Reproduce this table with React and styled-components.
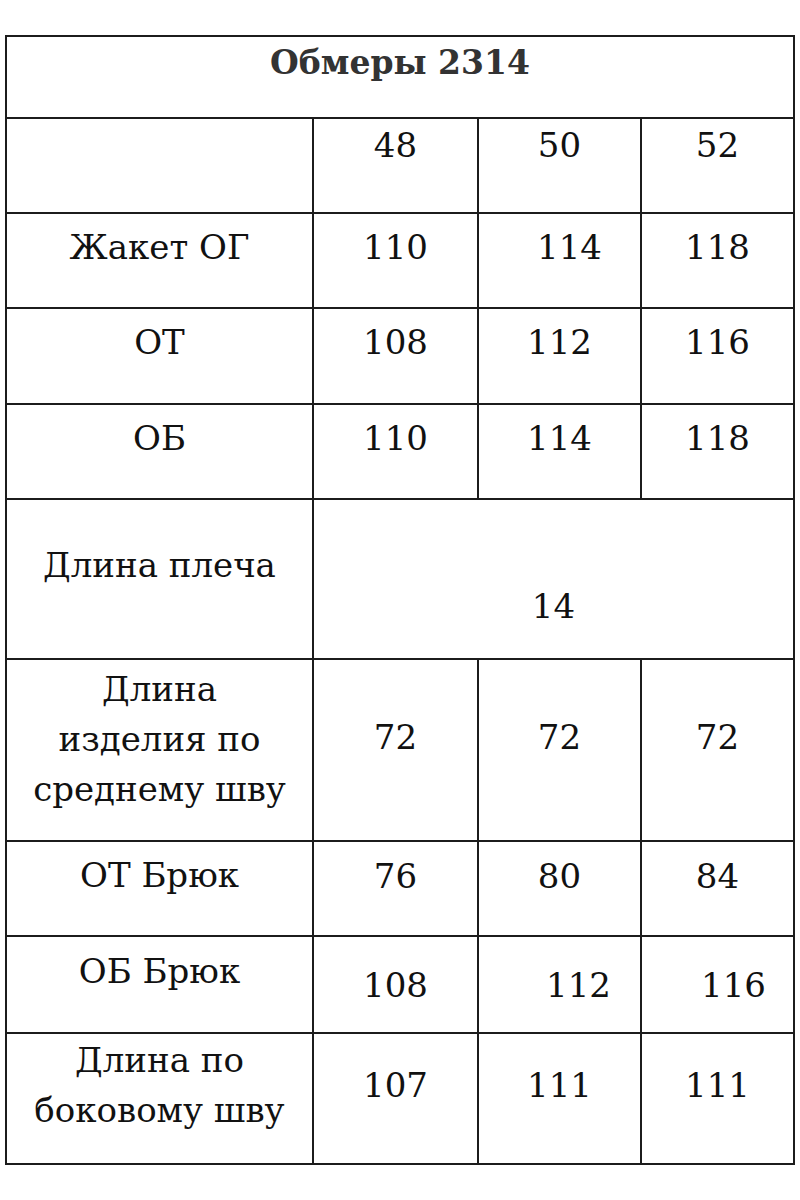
import React from 'react';
import styled, { createGlobalStyle } from 'styled-components';

const GlobalStyle = createGlobalStyle`
  html, body {
    margin: 0;
    padding: 0;
    background: #fff;
  }
  body {
    font-family: "DejaVu Serif", "Liberation Serif", serif;
    color: #111;
  }
`;

const Page = styled.div`
  width: 800px;
  height: 1200px;
  padding: 35px 0 0 5px;
  box-sizing: border-box;
  overflow: hidden;
`;

const Table = styled.div`
  display: grid;
  grid-template-columns: 307px 165px 163px 153px;
  grid-template-rows: 82px 95px 95px 96px 95px 160px 182px 95px 97px 131px;
  border-top: 2px solid #1c1c1c;
  border-left: 2px solid #1c1c1c;
  width: max-content;
`;

// $lift raises the text above the middle of the cell, $drop lowers it
const Cell = styled.div`
  grid-column: ${(p) => (p.$span ? `span ${p.$span}` : 'auto')};
  display: flex;
  align-items: center;
  justify-content: center;
  text-align: center;
  box-sizing: border-box;
  border-right: 2px solid #1c1c1c;
  border-bottom: 2px solid #1c1c1c;
  padding-bottom: ${(p) => p.$lift ?? 28}px;
  padding-top: ${(p) => p.$drop ?? 0}px;
  padding-left: ${(p) => (p.$shift ?? 0) * 2}px;
  font-size: 34px;
  line-height: 50px;
`;

const Title = styled(Cell)`
  font-weight: bold;
  font-size: 33px;
  color: #333;
`;

const rows = [
  { label: '', values: ['48', '50', '52'], lift: 42 },
  { label: 'Жакет ОГ', values: ['110', '114', '118'], shifts: [0, 10, 0] },
  { label: 'ОТ', values: ['108', '112', '116'] },
  { label: 'ОБ', values: ['110', '114', '118'] },
  { label: 'Длина плеча', merged: '14' },
  { label: 'Длина\nизделия по\nсреднему шву', values: ['72', '72', '72'], labelLift: 22, lift: 26 },
  { label: 'ОТ Брюк', values: ['76', '80', '84'], lift: 25 },
  { label: 'ОБ Брюк', values: ['108', '112', '116'], shifts: [0, 19, 16], lift: 0 },
  { label: 'Длина по\nбоковому шву', values: ['107', '111', '111'] },
];

const Label = ({ text, lift }) => (
  <Cell $lift={lift}>
    <span>
      {text.split('\n').map((line, i) => (
        <React.Fragment key={i}>
          {i > 0 && <br />}
          {line}
        </React.Fragment>
      ))}
    </span>
  </Cell>
);

export default function App() {
  return (
    <>
      <GlobalStyle />
      <Page>
        <Table>
          <Title $span={4}>Обмеры 2314</Title>
          {rows.map((row, r) => (
            <React.Fragment key={r}>
              <Label text={row.label} lift={row.labelLift ?? (row.lift === 42 ? 42 : 28)} />
              {row.merged ? (
                <Cell $span={3} $lift={0} $drop={54}>{row.merged}</Cell>
              ) : (
                row.values.map((v, c) => (
                  <Cell key={c} $lift={row.lift} $shift={row.shifts ? row.shifts[c] : 0}>
                    {v}
                  </Cell>
                ))
              )}
            </React.Fragment>
          ))}
        </Table>
      </Page>
    </>
  );
}
